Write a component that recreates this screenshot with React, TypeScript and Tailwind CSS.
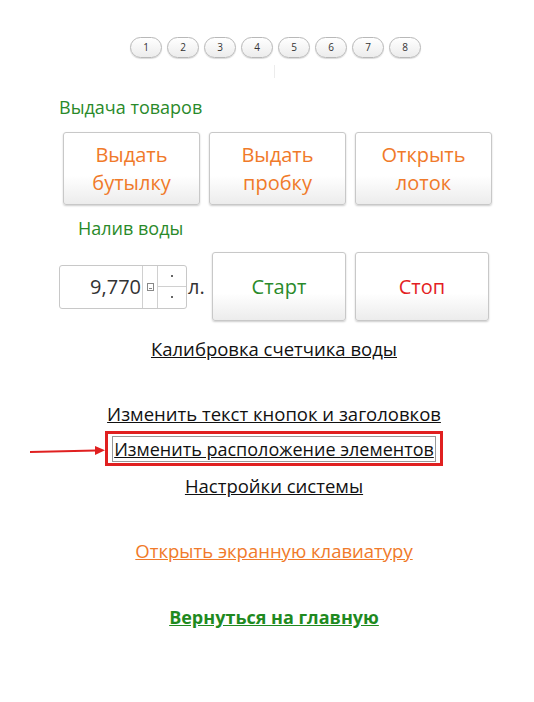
import React from "react";

const font = { fontFamily: '"Open Sans", "Noto Sans", sans-serif' };

function Pill({ n }: { n: number }) {
  return (
    <div className="w-[32px] h-[21px] rounded-full border border-[#b8b8b8] bg-gradient-to-b from-white to-[#ececec] shadow-[0_1px_1px_rgba(0,0,0,0.15)] flex items-center justify-center text-[10px] text-[#333]">
      {n}
    </div>
  );
}

function Btn({ children, color, w, h }: { children: React.ReactNode; color: string; w: string; h: string }) {
  return (
    <div
      className={`${w} ${h} border border-[#c8c8c8] rounded-[3px] bg-gradient-to-b from-white from-60% to-[#ececec] shadow-[0_1px_2px_rgba(0,0,0,0.2)] flex items-center justify-center text-center text-[20px] leading-[28px] ${color}`}
    >
      {children}
    </div>
  );
}

export default function App() {
  return (
    <div className="w-[534px] h-[702px] bg-white relative" style={font}>
      <div className="flex flex-col">
        <div className="flex gap-[5px] pt-[37px] pl-[130px]">
          {[1, 2, 3, 4, 5, 6, 7, 8].map((n) => (
            <Pill key={n} n={n} />
          ))}
        </div>
        <div className="h-[13px] w-px bg-[#ececec] ml-[274px] mt-[7px]" />
        <div className="pl-[59px] mt-[17px] text-[18px] leading-[24px] text-[#2a8a2a]">Выдача товаров</div>
        <div className="flex gap-[9px] pl-[63px] mt-[13px]">
          <Btn color="text-[#f07a2a]" w="w-[137px]" h="h-[73px]">Выдать<br />бутылку</Btn>
          <Btn color="text-[#f07a2a]" w="w-[137px]" h="h-[73px]">Выдать<br />пробку</Btn>
          <Btn color="text-[#f07a2a]" w="w-[137px]" h="h-[73px]">Открыть<br />лоток</Btn>
        </div>
        <div className="pl-[78px] mt-[11px] text-[18px] leading-[24px] text-[#2a8a2a]">Налив воды</div>
        <div className="flex items-center pl-[59px] mt-[12px]">
          <div className="flex w-[128px] h-[44px] border border-[#c8c8c8] rounded-[3px] bg-white">
            <div className="flex-1 flex items-center justify-end text-[20px] text-[#333] pr-[1px]">9,770</div>
            <div className="w-[15px] border-l border-[#d0d0d0] flex items-center justify-center">
              <div className="w-[7px] h-[8px] border border-[#888] flex flex-col justify-end p-[1px] gap-[1px]">
                <div className="h-px bg-[#888]" />
              </div>
            </div>
            <div className="w-[29px] border-l border-[#d0d0d0] flex flex-col">
              <div className="flex-1 flex items-center justify-center border-b border-[#d0d0d0]">
                <div className="w-[2px] h-[2px] bg-[#666]" />
              </div>
              <div className="flex-1 flex items-center justify-center">
                <div className="w-[2px] h-[2px] bg-[#666]" />
              </div>
            </div>
          </div>
          <div className="ml-[1px] text-[20px] text-[#333] w-[24px]">л.</div>
          <div className="flex gap-[9px]">
            <Btn color="text-[#2a8a2a]" w="w-[134px]" h="h-[69px]">Старт</Btn>
            <Btn color="text-[#e31e24]" w="w-[134px]" h="h-[69px]">Стоп</Btn>
          </div>
        </div>
        <div className="flex flex-col items-center text-[18.5px] leading-[24px] text-[#111] pl-[14px]">
          <a className="underline mt-[16px]">Калибровка счетчика воды</a>
          <a className="underline mt-[41px]">Изменить текст кнопок и заголовков</a>
          <div className="mt-[5px] border-[3px] border-[#e02020] px-[4px] pt-[2px] pb-[1px]">
            <a className="underline block border border-[#999] px-[1px] leading-[24px] text-[18px]">Изменить расположение элементов</a>
          </div>
          <a className="underline mt-[8px]">Настройки системы</a>
          <a className="underline mt-[41px] text-[#f07a2a]">Открыть экранную клавиатуру</a>
          <a className="underline mt-[42px] font-bold text-[18px] text-[#1f8a1f]">Вернуться на главную</a>
        </div>
      </div>
      <svg className="absolute left-[28px] top-[444px]" width="80" height="14" viewBox="0 0 80 14">
        <line x1="2" y1="8" x2="68" y2="6.5" stroke="#e02020" strokeWidth="2" />
        <polygon points="77,6.3 67,2 67,11" fill="#e02020" />
      </svg>
    </div>
  );
}
